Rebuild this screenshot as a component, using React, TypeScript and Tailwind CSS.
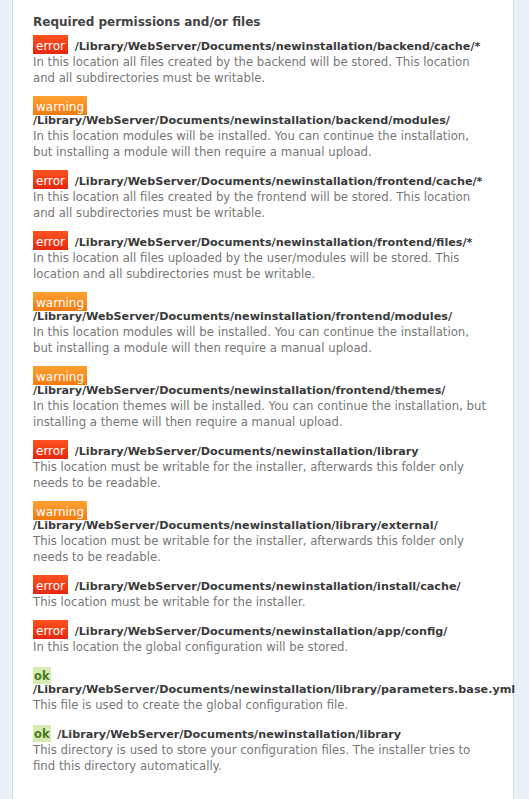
type Status = 'error' | 'warning' | 'ok'

interface Requirement {
  status: Status
  path: string
  description: string
}

const requirements: Requirement[] = [
  {
    status: 'error',
    path: '/Library/WebServer/Documents/newinstallation/backend/cache/*',
    description: 'In this location all files created by the backend will be stored. This location and all subdirectories must be writable.',
  },
  {
    status: 'warning',
    path: '/Library/WebServer/Documents/newinstallation/backend/modules/',
    description: 'In this location modules will be installed. You can continue the installation, but installing a module will then require a manual upload.',
  },
  {
    status: 'error',
    path: '/Library/WebServer/Documents/newinstallation/frontend/cache/*',
    description: 'In this location all files created by the frontend will be stored. This location and all subdirectories must be writable.',
  },
  {
    status: 'error',
    path: '/Library/WebServer/Documents/newinstallation/frontend/files/*',
    description: 'In this location all files uploaded by the user/modules will be stored. This location and all subdirectories must be writable.',
  },
  {
    status: 'warning',
    path: '/Library/WebServer/Documents/newinstallation/frontend/modules/',
    description: 'In this location modules will be installed. You can continue the installation, but installing a module will then require a manual upload.',
  },
  {
    status: 'warning',
    path: '/Library/WebServer/Documents/newinstallation/frontend/themes/',
    description: 'In this location themes will be installed. You can continue the installation, but installing a theme will then require a manual upload.',
  },
  {
    status: 'error',
    path: '/Library/WebServer/Documents/newinstallation/library',
    description: 'This location must be writable for the installer, afterwards this folder only needs to be readable.',
  },
  {
    status: 'warning',
    path: '/Library/WebServer/Documents/newinstallation/library/external/',
    description: 'This location must be writable for the installer, afterwards this folder only needs to be readable.',
  },
  {
    status: 'error',
    path: '/Library/WebServer/Documents/newinstallation/install/cache/',
    description: 'This location must be writable for the installer.',
  },
  {
    status: 'error',
    path: '/Library/WebServer/Documents/newinstallation/app/config/',
    description: 'In this location the global configuration will be stored.',
  },
  {
    status: 'ok',
    path: '/Library/WebServer/Documents/newinstallation/library/parameters.base.yml',
    description: 'This file is used to create the global configuration file.',
  },
  {
    status: 'ok',
    path: '/Library/WebServer/Documents/newinstallation/library',
    description: 'This directory is used to store your configuration files. The installer tries to find this directory automatically.',
  },
]

function Badge({ status }: { status: Status }) {
  if (status === 'ok') {
    return <span className="bg-[#d5ecb2] text-[#4b7a1c] font-bold text-[11.5px] px-[1px] pt-[2px] pb-px mr-[3px]">ok</span>
  }
  return (
    <span
      className={`text-white text-[12px] px-[3px] pt-[4px] pb-px mr-[3px] ${
        status === 'error'
          ? 'bg-gradient-to-b from-[#ff5220] to-[#e6250d]'
          : 'bg-gradient-to-b from-[#ffa131] to-[#f17b0d]'
      }`}
    >
      {status}
    </span>
  )
}

export default function App() {
  return (
    <div className="min-h-screen bg-[#e9f0f8] pl-3 pr-[15px] font-['DejaVu_Sans',sans-serif]">
      <div className="bg-white border-x border-[#d3d9e1] min-h-[799px] pl-5 pr-[25px] pt-[14px]">
        <h3 className="text-[12px] font-bold text-[#444] leading-4 mb-[10px]">Required permissions and/or files</h3>
        {requirements.map((req, i) => (
          <div key={i} className="mb-[15px]">
            <div className="text-[11.2px] leading-[13px]">
              <Badge status={req.status} />{' '}
              <span className="font-bold text-[#3a3a3a] whitespace-nowrap">{req.path}</span>
            </div>
            <p className="text-[11.7px] leading-4 text-[#777] mt-px">{req.description}</p>
          </div>
        ))}
      </div>
    </div>
  )
}
